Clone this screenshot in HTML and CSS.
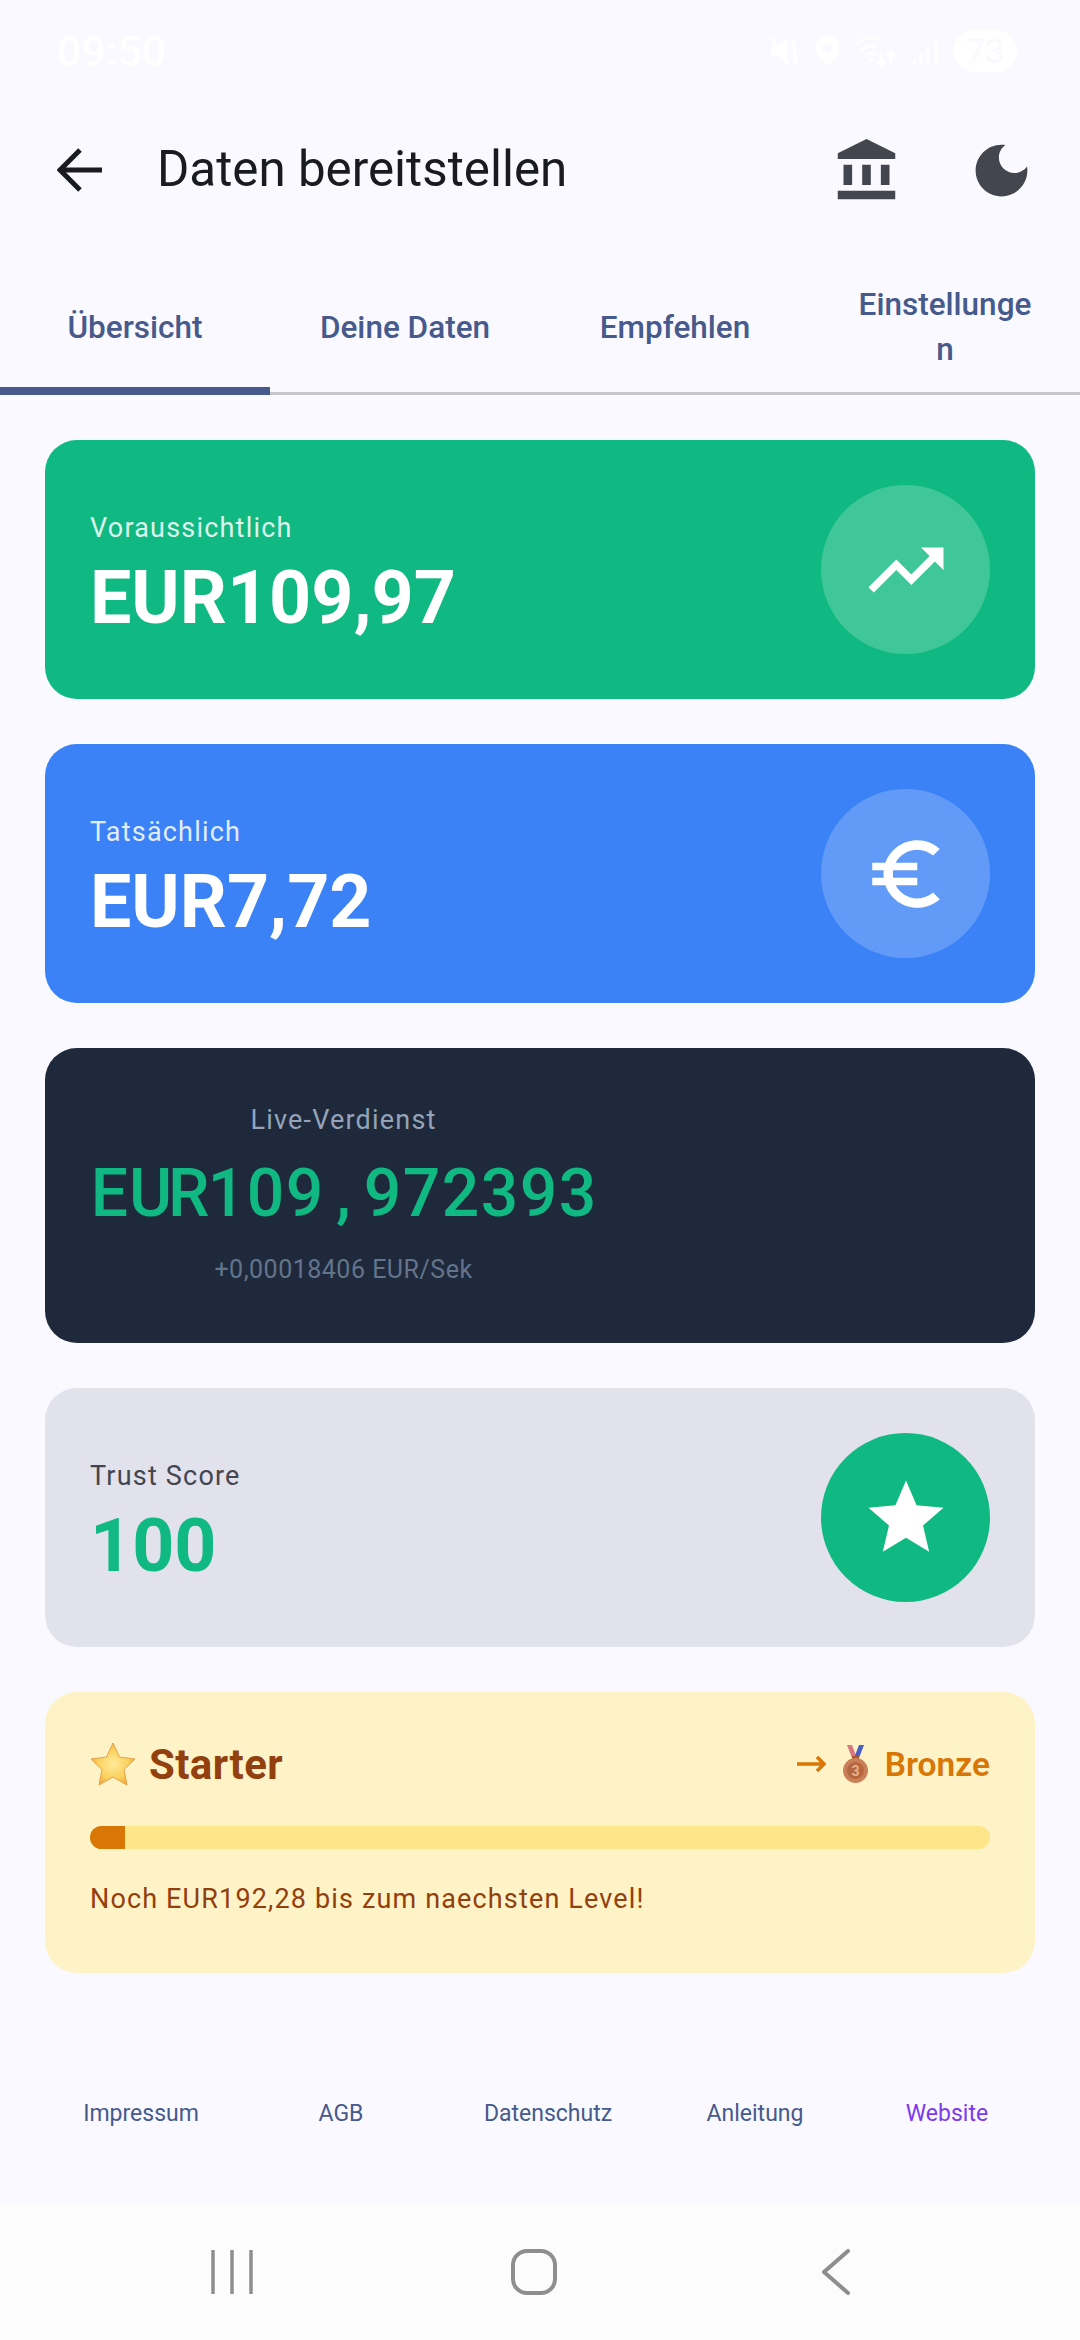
FILE: index.html
```html
<!DOCTYPE html>
<html lang="de">
<head>
    <meta charset="UTF-8">
    <meta name="viewport" content="width=device-width, initial-scale=1.0">
    <title>Daten bereitstellen</title>
    <link rel="stylesheet" href="styles.css">
</head>
<body>
    <div class="status-bar">
        <span class="status-time">09:50</span>
        <div class="status-icons">
            <svg width="31" height="30" viewBox="0 0 31 30"><path d="M1 10h6l10-8v26L7 20H1z" fill="#fff"/><path d="M2 2l16 26" stroke="#fff" stroke-width="3"/><path d="M23 3c4 3-3 6 1 9s-3 6 1 9-3 5 1 7" fill="none" stroke="#fff" stroke-width="3"/></svg>
            <svg width="25" height="30" viewBox="0 0 25 30"><path fill-rule="evenodd" d="M12.5 0A12 12 0 0 1 24.5 12c0 7-6 13-12 18C6.500 25 .5 19 .5 12A12 12 0 0 1 12.500 0zm0 8a4 4 0 1 0 0 8 4 4 0 0 0 0-8z" fill="#fff"/></svg>
            <svg width="44" height="34" viewBox="0 0 44 34"><path d="M2 10c8-7 18-8 26-4M7 16c5-4 11-5 16-3M12 21c3-2 6-2 9-1" fill="none" stroke="#fff" stroke-width="3"/><circle cx="17" cy="25" r="2.500" fill="#fff"/><path d="M27 19v12m-4-4 4 5 4-5M37 31V19m-4 4 4-5 4 5" fill="none" stroke="#fff" stroke-width="3"/></svg>
            <svg width="27" height="30" viewBox="0 0 27 30"><path d="M2 24v4M9 17v11M16 10v18M24 2v26" stroke="#fff" stroke-width="3"/></svg>
            <span class="status-battery">73</span>
        </div>
    </div>

    <header class="app-bar">
        <svg width="46" height="46" viewBox="0 0 46 46"><path d="M45 23H5M23 3 3 23l20 20" fill="none" stroke="#1a1b20" stroke-width="5"/></svg>
        <h1 class="app-title">Daten bereitstellen</h1>
        <div class="app-actions">
            <svg width="69" height="69" viewBox="0 0 24 24"><path d="M4 10h3v7H4zm6.500 0h3v7h-3zM2 19h20v3H2zm15-9h3v7h-3zM12 1L2 6v2h20V6z" fill="#44464f"/></svg>
            <svg width="69" height="69" viewBox="0 0 24 24"><path d="M12 3c-4.970 0-9 4.030-9 9s4.030 9 9 9 9-4.030 9-9c0-.46-.04-.92-.1-1.360-.98 1.370-2.580 2.260-4.400 2.260-2.980 0-5.400-2.420-5.400-5.400 0-1.810.89-3.420 2.260-4.400-.44-.06-.9-.1-1.360-.1z" fill="#44464f"/></svg>
        </div>
    </header>

    <nav class="tabs">
        <div class="tab active">Übersicht</div>
        <div class="tab">Deine Daten</div>
        <div class="tab">Empfehlen</div>
        <div class="tab">Einstellungen</div>
    </nav>

    <main class="cards">
        <section class="card card-green">
            <div>
                <div class="card-label">Voraussichtlich</div>
                <div class="card-amount">EUR109,97</div>
            </div>
            <div class="card-circle">
                <svg width="90" height="90" viewBox="0 0 24 24"><path d="M16 6l2.290 2.290-4.880 4.880-4-4L2 16.590 3.410 18l6-6 4 4 6.300-6.290L22 12V6z" fill="#fff"/></svg>
            </div>
        </section>

        <section class="card card-blue">
            <div>
                <div class="card-label">Tatsächlich</div>
                <div class="card-amount">EUR7,72</div>
            </div>
            <div class="card-circle">
                <svg width="90" height="90" viewBox="0 0 24 24"><path d="M15 18.500c-2.510 0-4.680-1.420-5.760-3.500H15v-2H8.580c-.05-.33-.08-.66-.08-1s.03-.67.08-1H15V9H9.240C10.320 6.920 12.500 5.500 15 5.500c1.610 0 3.090.59 4.230 1.570L21 5.300C19.410 3.870 17.300 3 15 3c-3.920 0-7.240 2.510-8.480 6H3v2h3.060c-.04.33-.06.66-.06 1s.02.67.06 1H3v2h3.520c1.240 3.490 4.560 6 8.480 6 2.310 0 4.410-.87 6-2.300l-1.780-1.770c-1.130.98-2.600 1.570-4.220 1.570z" fill="#fff"/></svg>
            </div>
        </section>

        <section class="card card-live">
            <div class="live-box">
                <div class="live-label">Live-Verdienst</div>
                <div class="live-value"><span>E</span><span>U</span><span>R</span><span>1</span><span>0</span><span>9</span><span>,</span><span>9</span><span>7</span><span>2</span><span>3</span><span>9</span><span>3</span></div>
                <div class="live-rate">+0,00018406 EUR/Sek</div>
            </div>
        </section>

        <section class="card card-trust">
            <div>
                <div class="card-label">Trust Score</div>
                <div class="card-amount">100</div>
            </div>
            <div class="card-circle">
                <svg width="90" height="90" viewBox="0 0 24 24"><path d="M12 17.270L18.180 21l-1.640-7.030L22 9.240l-7.190-.61L12 2 9.190 8.630 2 9.240l5.460 4.730L5.820 21z" fill="#fff"/></svg>
            </div>
        </section>

        <section class="card-level">
            <div class="level-head">
                <div class="level-name">
                    <svg width="46" height="44" viewBox="0 0 46 44">
                        <defs><radialGradient id="starFill" cx="0.5" cy="0.5" r="0.6"><stop offset="0" stop-color="#ffeb99"/><stop offset="0.6" stop-color="#fbcf5c"/><stop offset="1" stop-color="#ee9a3a"/></radialGradient></defs>
                        <path d="M23 1l6.500 14 15.500 2-11 10.500L37 43l-14-8-14 8 3-15.500L1 17l15.500-2z" fill="url(#starFill)" stroke="#e6a04a" stroke-width="1"/>
                    </svg>
                    <span>Starter</span>
                </div>
                <div class="level-next">
                    <svg width="29" height="18" viewBox="0 0 29 18"><path d="M0 9h27M20 2l7 7-7 7" fill="none" stroke="#d97706" stroke-width="3.500"/></svg>
                    <svg width="25" height="38" viewBox="0 0 25 38">
                        <path d="M4 0h5l5 13H9z" fill="#d9777f"/>
                        <path d="M21 0h-5l-5 13h5z" fill="#4a5fc4"/>
                        <rect x="9" y="11" width="7" height="4" fill="#a85a32"/>
                        <circle cx="12.500" cy="25.500" r="12.500" fill="#c97f58"/>
                        <circle cx="12.500" cy="25.500" r="8.500" fill="#b5683f"/>
                        <text class="medal-rank" x="12.500" y="30.500">3</text>
                    </svg>
                    <span>Bronze</span>
                </div>
            </div>
            <div class="level-track"><div class="level-fill" style="width: 3.9%"></div></div>
            <p class="level-note">Noch EUR192,28 bis zum naechsten Level!</p>
        </section>
    </main>

    <footer class="links">
        <a href="#">Impressum</a>
        <a href="#">AGB</a>
        <a href="#">Datenschutz</a>
        <a href="#">Anleitung</a>
        <a href="#" class="link-site">Website</a>
    </footer>

    <div class="nav-bar">
        <svg width="46" height="44" viewBox="0 0 46 44"><path d="M4 1v42M23 1v42M42 1v42" stroke="#8e8e8e" stroke-width="3.500" stroke-linecap="round"/></svg>
        <svg width="46" height="46" viewBox="0 0 46 46"><rect x="2" y="2" width="42" height="42" rx="14" fill="none" stroke="#8e8e8e" stroke-width="4"/></svg>
        <svg width="30" height="46" viewBox="0 0 30 46"><path d="M27 2 3 23l24 21" fill="none" stroke="#8e8e8e" stroke-width="4" stroke-linecap="round" stroke-linejoin="round"/></svg>
    </div>
</body>
</html>
```

FILE: styles.css
```css
* {
    box-sizing: border-box;
}

body {
    font-family: Roboto, "Noto Sans", sans-serif;
    margin: 0;
    width: 1080px;
    height: 2340px;
    background-color: #f9f9ff;
    color: #1a1b20;
    display: flex;
    flex-direction: column;
}

/* status bar, white on the light page */
.status-bar {
    height: 102px;
    padding: 30px 63px 0 57px;
    display: flex;
    justify-content: space-between;
    align-items: flex-start;
    color: white;
}

.status-time {
    font-size: 43px;
    font-weight: 500;
    line-height: 42px;
}

.status-icons {
    display: flex;
    align-items: center;
    gap: 14px;
    height: 42px;
}

.status-battery {
    width: 64px;
    height: 42px;
    border-radius: 21px;
    background-color: white;
    color: #f9f9ff;
    font-size: 34px;
    line-height: 42px;
    text-align: center;
}

.app-bar {
    height: 136px;
    margin-bottom: 26px;
    padding: 0 44px 0 57px;
    display: flex;
    align-items: center;
}

.app-title {
    margin: -3px 0 0 54px;
    font-size: 49.3px;
    font-weight: 400;
    flex: 1;
}

.app-actions {
    display: flex;
    gap: 66px;
}

.tabs {
    display: grid;
    grid-template-columns: repeat(4, 1fr);
    height: 131px;
    border-bottom: 3px solid #c5c6d0;
}

.tab {
    position: relative;
    display: flex;
    align-items: center;
    justify-content: center;
    padding: 0 46px 2px;
    text-align: center;
    overflow-wrap: anywhere;
    color: #465a8c;
    font-size: 31.5px;
    font-weight: 500;
    line-height: 45px;
}

.tab.active::after {
    content: "";
    position: absolute;
    left: 0;
    right: 0;
    bottom: -3px;
    height: 8px;
    background-color: #465a8c;
}

.cards {
    padding: 45px 45px 0;
    display: flex;
    flex-direction: column;
    gap: 45px;
}

.card {
    padding: 45px;
    border-radius: 32px;
    display: flex;
    justify-content: space-between;
    align-items: center;
    color: white;
}

.card-green {
    background-color: #10b981;
}

.card-blue {
    background-color: #3b82f6;
}

.card-live {
    background-color: #1e293b;
}

.card-trust {
    background-color: #e1e2ec;
}

.card-label {
    font-size: 27px;
    line-height: 40px;
    letter-spacing: 1.2px;
    opacity: 0.85;
}

.card-amount {
    padding: 18px 0 2px;
    font-size: 73.5px;
    font-weight: 700;
    line-height: 64px;
}

.card-circle {
    width: 169px;
    height: 169px;
    border-radius: 50%;
    background-color: rgba(255, 255, 255, 0.2);
    display: flex;
    align-items: center;
    justify-content: center;
}

.card-trust .card-label {
    color: #44464f;
    opacity: 1;
}

.card-trust .card-amount {
    color: #10b981;
}

.card-trust .card-circle {
    background-color: #10b981;
}

.live-box {
    display: flex;
    flex-direction: column;
    align-items: center;
}

.live-label {
    color: #94a3b8;
    font-size: 27px;
    line-height: 54px;
    letter-spacing: 1.2px;
}

.live-value {
    display: flex;
    color: #10b981;
    font-size: 66px;
    font-weight: 500;
    line-height: 94px;
}

.live-value span {
    width: 39px;
    text-align: center;
}

.live-rate {
    color: #64748b;
    font-size: 25px;
    line-height: 57px;
    letter-spacing: 0.5px;
}

.card-level {
    padding: 45px 45px 50px;
    border-radius: 32px;
    background-color: #fef3c7;
}

.level-head {
    display: flex;
    justify-content: space-between;
    align-items: center;
    height: 54px;
}

.level-name {
    display: flex;
    align-items: center;
    gap: 13px;
    color: #92400e;
    font-size: 42px;
    font-weight: 700;
    letter-spacing: 0.4px;
}

.level-next {
    display: flex;
    align-items: center;
    gap: 17px;
    color: #d97706;
    font-size: 33.5px;
    font-weight: 600;
}

.medal-rank {
    fill: #e8b08e;
    font-size: 14px;
    font-weight: 700;
    text-anchor: middle;
}

.level-track {
    margin-top: 35px;
    height: 23px;
    border-radius: 12px;
    background-color: #fde68a;
    overflow: hidden;
}

.level-fill {
    height: 100%;
    background-color: #d97706;
}

.level-note {
    margin: 26px 0 0;
    color: #92400e;
    font-size: 27px;
    line-height: 48px;
    letter-spacing: 1.15px;
}

.links {
    margin-top: auto;
    height: 132px;
    padding: 0 40px;
    display: grid;
    grid-template-columns: 202px 198px 216px 198px 186px;
    justify-items: center;
}

.links a {
    color: #465a8c;
    font-size: 23px;
    font-weight: 400;
    line-height: 82px;
    text-decoration: none;
}

.links .link-site {
    color: #7c3aed;
}

.nav-bar {
    height: 135px;
    padding: 0 93px 2px 81px;
    background-color: #fcfcfc;
    display: grid;
    grid-template-columns: repeat(3, 1fr);
    justify-items: center;
    align-items: center;
}
```
